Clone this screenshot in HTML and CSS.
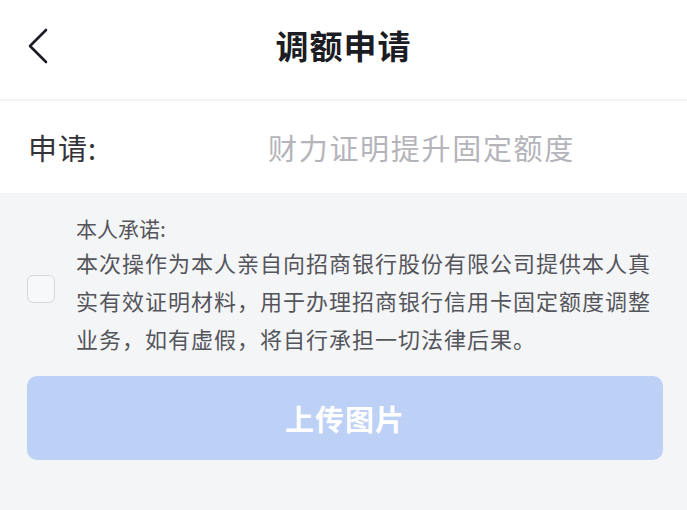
FILE: index.html
```html
<!DOCTYPE html>
<html lang="zh-CN">
<head>
    <meta charset="UTF-8">
    <meta name="viewport" content="width=device-width, initial-scale=1.0">
    <title>调额申请</title>
    <link rel="stylesheet" href="styles.css">
</head>
<body>
    <header class="nav">
        <span class="back">
            <svg width="22" height="36" viewBox="0 0 22 36">
                <path d="M19 2 L3 18 L19 34" fill="none" stroke="#1c1c24" stroke-width="2.6" stroke-linecap="round" stroke-linejoin="round"/>
            </svg>
        </span>
        <h1>调额申请</h1>
    </header>

    <div class="apply-row">
        <span class="label">申请:</span>
        <span class="value">财力证明提升固定额度</span>
    </div>

    <main class="content">
        <div class="promise">
            <span class="checkbox"></span>
            <div class="promise-text">
                <p class="promise-title">本人承诺:</p>
                <p>本次操作为本人亲自向招商银行股份有限公司提供本人真实有效证明材料，用于办理招商银行信用卡固定额度调整业务，如有虚假，将自行承担一切法律后果。</p>
            </div>
        </div>
        <button class="upload">上传图片</button>
    </main>
</body>
</html>
```

FILE: styles.css
```css
body {
    margin: 0;
    padding: 0;
    width: 687px;
    height: 510px;
    overflow: hidden;
    background-color: #f4f5f7;
    font-family: "Noto Sans CJK SC", "Noto Sans", sans-serif;
}
.nav {
    height: 99px;
    background: white;
    border-bottom: 2px solid #f3f3f5;
    display: flex;
    align-items: center;
    justify-content: center;
    position: relative;
}
.back {
    position: absolute;
    left: 27px;
    top: 28px;
    display: flex;
}
.nav h1 {
    margin: 0 0 10px;
    font-size: 33px;
    font-weight: 700;
    color: #1c1c24;
    letter-spacing: 1px;
}
.apply-row {
    height: 92px;
    background: white;
    display: flex;
    align-items: center;
    padding: 0 28px;
}
.label {
    width: 240px;
    font-size: 29px;
    color: #333338;
    letter-spacing: 1px;
}
.value {
    font-size: 29px;
    color: #b4b4ba;
    letter-spacing: 1.7px;
}
.content {
    padding: 20px 24px 0 27px;
}
.promise {
    display: flex;
    align-items: center;
    gap: 21px;
}
.checkbox {
    flex: none;
    width: 26px;
    height: 26px;
    border: 1.5px solid #d6d7db;
    border-radius: 6px;
    background: #f7f8fa;
    margin-top: 8px;
}
.promise-text {
    width: 585px;
    color: #55555c;
    font-size: 22px;
    letter-spacing: 1px;
}
.promise-text p {
    margin: 0;
    line-height: 38px;
}
.promise-text .promise-title {
    font-size: 21px;
    line-height: 30px;
    letter-spacing: 0;
}
.upload {
    display: block;
    width: 636px;
    height: 84px;
    margin-top: 19px;
    border: none;
    border-radius: 10px;
    background-color: #bdd0f5;
    color: white;
    font-family: inherit;
    font-size: 29px;
    font-weight: 700;
    letter-spacing: 1px;
}
```
